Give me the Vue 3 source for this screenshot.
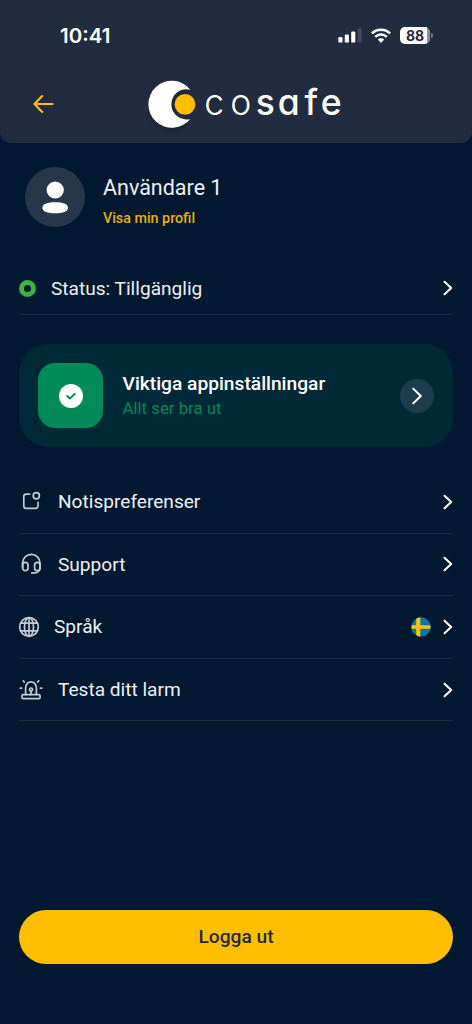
<script setup>
const rows = [
  { id: 'notis', label: 'Notispreferenser' },
  { id: 'support', label: 'Support' },
  { id: 'lang', label: 'Språk' },
  { id: 'alarm', label: 'Testa ditt larm' },
]
</script>

<template>
  <main class="screen">
    <header class="top">
      <div class="statusbar">
        <span class="time">10:41</span>
        <div class="indicators">
          <svg class="signal" width="24" height="16" viewBox="0 0 24 16">
            <rect x="0.4" y="10" width="4.1" height="5.6" rx="1.2" fill="#fff" />
            <rect x="6.8" y="7.5" width="4.1" height="8.1" rx="1.2" fill="#fff" />
            <rect x="13.2" y="4.4" width="4.1" height="11.2" rx="1.2" fill="#fff" />
            <rect x="19.6" y="1" width="4.1" height="14.6" rx="1.2" fill="#3f4a5b" />
          </svg>
          <svg class="wifi" width="20" height="15" viewBox="0 0 20 15">
            <g fill="none" stroke="#fff" stroke-width="2.5">
              <path d="M0.9 5.4a13 13 0 0 1 18.2 0" />
              <path d="M4.2 8.9a8.3 8.3 0 0 1 11.6 0" />
            </g>
            <path d="M6.8 11.6a4.6 4.6 0 0 1 6.4 0L10 14.9z" fill="#fff" />
          </svg>
          <div class="battery"><span>88</span></div>
          <i class="battery-tip"></i>
        </div>
      </div>
      <div class="brandbar">
        <svg class="back" width="22" height="20" viewBox="0 0 22 20" fill="none" stroke="#ffbf00" stroke-width="2.1" stroke-linecap="round" stroke-linejoin="round">
          <path d="M19.5 10H1.4M9.2 2L1.4 10l7.8 7.9" />
        </svg>
        <svg class="logo" width="200" height="60" viewBox="0 0 200 60">
          <path class="moon" d="M42.3 15.7A23.5 23.5 0 1 0 42.3 44.9A15.1 15.1 0 1 1 42.3 15.7Z" fill="#fff" />
          <circle cx="37" cy="30.3" r="10.4" fill="#ffbf00" />
          <g class="wordmark" fill="#fff">
            <text class="thin" x="56.2 82.2" y="40.8">co</text>
            <text class="bold" x="107.7 129.7 156.5 172.8" y="40.8">safe</text>
          </g>
        </svg>
      </div>
    </header>

    <section class="profile">
      <div class="avatar">
        <svg width="60" height="60" viewBox="0 0 60 60" fill="#fff">
          <circle cx="30.2" cy="23" r="8.6" />
          <path d="M30.2 35.3c7.4 0 12.8 1.7 12.8 5.5s-5.4 5.5-12.8 5.5-12.8-1.7-12.8-5.5 5.4-5.5 12.8-5.5z" />
        </svg>
      </div>
      <div class="who">
        <div class="name">Användare 1</div>
        <a class="link">Visa min profil</a>
      </div>
    </section>

    <section class="row status">
      <i class="dot"></i>
      <span class="label">Status: Tillgänglig</span>
      <svg class="chev" width="10" height="16" viewBox="0 0 10 16"><path d="M1.5 1.7L8.2 8l-6.7 6.3" /></svg>
    </section>

    <section class="card">
      <div class="tile">
        <svg width="24" height="24" viewBox="0 0 24 24">
          <circle cx="12" cy="12" r="12" fill="#fff" />
          <path d="M8.2 12l2.7 2.6 4.9-4.8" fill="none" stroke="#028a58" stroke-width="1.9" stroke-linecap="round" stroke-linejoin="round" />
        </svg>
      </div>
      <div class="card-text">
        <div class="card-title">Viktiga appinställningar</div>
        <div class="card-sub">Allt ser bra ut</div>
      </div>
      <div class="go">
        <svg class="chev" width="12" height="20" viewBox="0 0 12 20"><path d="M2.2 2.6L9.8 10l-7.6 7.4" /></svg>
      </div>
    </section>

    <nav class="menu">
      <div v-for="row in rows" :key="row.id" class="row" :class="row.id">
        <svg v-if="row.id === 'notis'" class="icon" width="24" height="24" viewBox="0 0 24 24">
          <path d="M10.6 4.2H7.2a2.4 2.4 0 0 0-2.4 2.4v9.4a2.4 2.4 0 0 0 2.4 2.4h9.4a2.4 2.4 0 0 0 2.4-2.4v-3.6" />
          <circle cx="17.3" cy="5.7" r="3.1" />
        </svg>
        <svg v-else-if="row.id === 'support'" class="icon" width="24" height="24" viewBox="0 0 24 24">
          <path d="M3.6 15.5v-4.4a8.7 8.7 0 0 1 17.4 0v4.9a5 5 0 0 1-5 4.9h-3.2" />
          <path d="M3.6 13a2.7 2.7 0 0 1 5.4 0v3a2.7 2.7 0 0 1-5.4 0zM15.6 13a2.7 2.7 0 0 1 5.4 0v3a2.7 2.7 0 0 1-5.4 0z" />
        </svg>
        <svg v-else-if="row.id === 'lang'" class="icon" width="24" height="24" viewBox="0 0 24 24">
          <circle cx="12" cy="12" r="9.3" />
          <ellipse cx="12" cy="12" rx="4.5" ry="9.3" />
          <path d="M12 2.7v18.6M3.7 8.2h16.6M3.7 15.8h16.6" />
        </svg>
        <svg v-else class="icon" width="24" height="24" viewBox="0 0 24 24">
          <path d="M6.6 16.6v-6.8a5.4 6 0 0 1 10.8 0v6.8" />
          <rect x="2.9" y="16.7" width="18.2" height="4" rx="1.4" />
          <circle cx="12" cy="11.5" r="1.5" />
          <path d="M12 13V16.6M1.3 10.2h1.3M21.4 10.2h1.3M4.3 2.8l.9 1.2M19.7 2.8l-.9 1.2" />
        </svg>
        <span class="label">{{ row.label }}</span>
        <svg v-if="row.id === 'lang'" class="flag" width="20" height="20" viewBox="0 0 20 20">
          <clipPath id="round"><circle cx="10" cy="10" r="9.7" /></clipPath>
          <g clip-path="url(#round)">
            <rect width="20" height="20" fill="#0b74a8" />
            <path d="M5.2 0h4.1v20H5.2zM0 8.2h20v3.6H0z" fill="#ffc400" />
          </g>
        </svg>
        <svg class="chev" width="10" height="16" viewBox="0 0 10 16"><path d="M1.5 1.7L8.2 8l-6.7 6.3" /></svg>
      </div>
    </nav>

    <button class="logout" type="button">Logga ut</button>
  </main>
</template>

<style>
body {
  background: #001931;
}
</style>

<style scoped>
.screen {
  box-sizing: border-box;
  width: 472px;
  height: 1024px;
  display: flex;
  flex-direction: column;
  overflow: hidden;
  background: #001931;
  color: #eef1f4;
  font-family: Roboto, "Liberation Sans", sans-serif;
}
svg {
  display: block;
  flex: none;
}
.top {
  height: 143px;
  flex: none;
  border-radius: 0 0 11px 11px;
  background: #232c3e;
}
.statusbar {
  display: flex;
  justify-content: space-between;
  align-items: center;
  height: 70px;
  padding: 0 39px 0 60px;
  font-family: Inter, sans-serif;
  color: #fff;
}
.time {
  font-size: 20.5px;
  font-weight: 560;
  letter-spacing: 0;
}
.indicators {
  display: flex;
  align-items: center;
}
.wifi {
  margin-left: 9px;
}
.battery {
  width: 30px;
  height: 17px;
  margin-left: 9px;
  border-radius: 5px;
  background: linear-gradient(90deg, #fff 0 27px, #8b929d 27px);
  color: #232c3e;
  font-size: 14px;
  font-weight: 700;
  line-height: 17px;
}
.battery span {
  display: block;
  width: 30px;
  text-align: center;
}
.battery-tip {
  width: 2px;
  height: 5px;
  margin-left: 1px;
  border-radius: 0 3px 3px 0;
  background: #737b88;
}
.brandbar {
  display: flex;
  align-items: center;
  height: 68px;
  padding-left: 33px;
}
.logo {
  margin-left: 93px;
}
.moon {
  filter: drop-shadow(0 3px 3px #101d2d99);
}
.wordmark {
  font-family: Inter, sans-serif;
  font-size: 35.5px;
  font-feature-settings: "cv11";
}
.thin {
  font-weight: 300;
}
.bold {
  font-weight: 500;
}
.profile {
  display: flex;
  align-items: center;
  height: 60px;
  margin-top: 24px;
  padding-left: 25px;
  flex: none;
}
.avatar {
  width: 60px;
  height: 60px;
  border-radius: 50%;
  background: #283649;
}
.who {
  margin-left: 18px;
  padding-top: 6px;
}
.name {
  font-size: 21.5px;
  line-height: 30px;
}
.link {
  display: block;
  margin-top: 5px;
  font-size: 14.3px;
  line-height: 20px;
  font-weight: 500;
  color: #e9b007;
}
.row {
  box-sizing: border-box;
  display: flex;
  align-items: center;
  height: 62.6px;
  border-bottom: 1px solid #1f2c3f;
  font-size: 19.1px;
}
.label {
  margin-right: auto;
}
.chev {
  fill: none;
  stroke: #fff;
  stroke-width: 2;
  stroke-linecap: round;
  stroke-linejoin: round;
}
.status {
  flex: none;
  height: 54px;
  margin: 34px 19px 0;
  padding-top: 1px;
}
.dot {
  box-sizing: border-box;
  width: 17px;
  height: 17px;
  margin-right: 15px;
  border: 5px solid #43b043;
  border-radius: 50%;
}
.card {
  box-sizing: border-box;
  display: flex;
  align-items: center;
  flex: none;
  height: 103px;
  margin: 29px 19px 0;
  padding: 0 19px;
  border-radius: 29px;
  background: #002938;
}
.tile {
  display: flex;
  align-items: center;
  justify-content: center;
  width: 65px;
  height: 65px;
  border-radius: 17px;
  background: #028a58;
}
.card-text {
  margin: 0 auto 0 19.5px;
}
.card-title {
  font-size: 19.2px;
  line-height: 24px;
  font-weight: 500;
  color: #fff;
}
.card-sub {
  font-size: 16.8px;
  line-height: 24px;
  color: #028554;
}
.go {
  display: flex;
  align-items: center;
  justify-content: center;
  width: 34px;
  height: 34px;
  border-radius: 50%;
  background: #1d3d4e;
}
.menu {
  margin: 24px 19px 0;
}
.icon {
  margin-right: 15px;
  fill: none;
  stroke: #c4cad1;
  stroke-width: 1.7;
  stroke-linecap: round;
  stroke-linejoin: round;
}
.lang .icon {
  margin-left: -2px;
  margin-right: 13px;
}
.flag {
  margin-right: 12px;
}
.logout {
  flex: none;
  height: 54px;
  margin: auto 19px 60px;
  padding: 0 6px 2px;
  border: 0;
  border-radius: 27px;
  background: #ffbf00;
  color: #232c3e;
  font: 500 19.2px Roboto, sans-serif;
}
</style>
